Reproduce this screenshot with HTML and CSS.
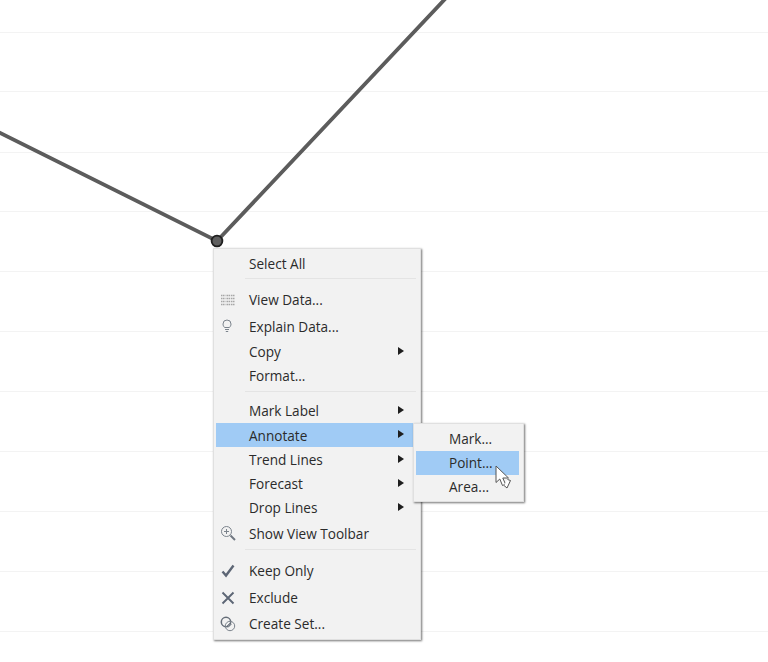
FILE: index.html
```html
<!DOCTYPE html>
<html lang="en">
<head>
<meta charset="utf-8">
<title>Annotate menu</title>
<link rel="stylesheet" href="styles.css">
</head>
<body>
<main class="stage">
  <svg class="chart" width="768" height="662" viewBox="0 0 768 662">
    <g class="grid">
      <path d="M0 32.5H768M0 91.5H768M0 152.5H768M0 211.5H768M0 271.5H768M0 331.5H768M0 391.5H768M0 451.5H768M0 511.5H768M0 571.5H768M0 631.5H768"/>
    </g>
    <polyline class="trend" points="-4,131 217,241 446,-2"/>
    <circle class="mark" cx="217" cy="241" r="5.4"/>
  </svg>

  <div class="menu main-menu">
    <div class="row">Select All</div>
    <div class="sep sep-a"></div>
    <div class="row tall"><svg class="icon" viewBox="0 0 16 12"><path class="tbl" d="M1 1.500H15M1 4.500H15M1 7.500H15M1 10.500H15"/><path class="tbl-cut" d="M5.500 0V12M10.500 0V12"/></svg>View Data...</div>
    <div class="row tall"><svg class="icon bulb" viewBox="0 0 16 16"><path class="thin" d="M5.600 10.500C4.600 9.500 4 8.400 4 7a4 4 0 0 1 8 0c0 1.400-.6 2.500-1.600 3.500zM6 12.500H10M6.800 14.500H9.200"/></svg>Explain Data...</div>
    <div class="row">Copy<span class="arrow"></span></div>
    <div class="row">Format...</div>
    <div class="sep sep-b"></div>
    <div class="row">Mark Label<span class="arrow"></span></div>
    <div class="row active annotate">Annotate<span class="arrow"></span></div>
    <div class="row">Trend Lines<span class="arrow"></span></div>
    <div class="row">Forecast<span class="arrow"></span></div>
    <div class="row">Drop Lines<span class="arrow"></span></div>
    <div class="row tall toolbar"><svg class="icon" viewBox="0 0 16 16"><circle class="thin" cx="6.500" cy="6.500" r="5"/><path class="thin" d="M4 6.500H9M6.500 4V9"/><path class="thick" d="M10.500 10.500L15 15"/></svg>Show View Toolbar</div>
    <div class="sep sep-c"></div>
    <div class="row tall keep"><svg class="icon" viewBox="0 0 16 16"><path class="check" d="M2.500 8.500L6 12.500L13.500 2.500"/></svg>Keep Only</div>
    <div class="row tall exclude"><svg class="icon" viewBox="0 0 16 16"><path class="cross" d="M2.500 2.500L13.500 13.500M13.500 2.500L2.500 13.500"/></svg>Exclude</div>
    <div class="row tall"><svg class="icon" viewBox="0 0 16 16"><circle class="thick-ring" cx="6" cy="6" r="4.700"/><circle class="thin" cx="10" cy="10" r="4.700"/><path class="thin" d="M6.500 10.500L10.500 6.500M8 11.500L11.500 8"/></svg>Create Set...</div>
  </div>

  <div class="menu sub-menu">
    <div class="row sub-row">Mark...</div>
    <div class="row sub-row active">Point...</div>
    <div class="row sub-row">Area...</div>
  </div>

  <svg class="cursor" width="18" height="25" viewBox="0 0 18 25"><path d="M1 1V17.500L4.800 14L7.500 20.500L10.500 19.200L7.800 13H13.500L1 1Z"/><path d="M9 20.500L12 23L15.500 15.500L12.500 14.500"/></svg>
</main>
</body>
</html>
```
FILE: styles.css
```css
* { box-sizing: border-box; }
html, body { margin: 0; padding: 0; background: #fff; }
.stage {
  position: relative;
  width: 768px;
  height: 662px;
  overflow: hidden;
  font-family: "Open Sans", "Noto Sans", sans-serif;
  font-size: 13.6px;
  color: #2b2b2b;
}
.chart { display: block; }
.grid path { fill: none; stroke: #f3f3f3; stroke-width: 1; }
.trend { fill: none; stroke: #5c5c5c; stroke-width: 3.8; }
.mark { fill: #5f5f5f; stroke: #1f1f1f; stroke-width: 1.8; }

.menu {
  position: absolute;
  background: #f2f2f2;
  border: 1px solid #e0e0e0;
  box-shadow: 1px 1px 2px rgba(0, 0, 0, .55);
}
.main-menu { left: 213px; top: 248px; width: 208px; height: 392px; padding: 3px 7px 3px 2px; }
.sub-menu { left: 413px; top: 423px; width: 111px; height: 79px; padding: 3px 4px 0 2px; }

.row {
  position: relative;
  height: 24px;
  line-height: 24px;
  padding-left: 33px;
  white-space: nowrap;
}
.row.tall { height: 26.500px; line-height: 26.500px; }
.row.active { background: #a0cbf5; }
.row.annotate { height: 24px; line-height: 26px; margin-bottom: 1px; }
.row.toolbar { height: 27.500px; line-height: 27.500px; }
.row.keep { height: 27px; line-height: 25.500px; }
.row.exclude { height: 26px; line-height: 26px; }
.sub-row { padding-left: 33px; }

.sep { margin-left: 29px; margin-right: -3px; border-top: 1px solid #e4e4e4; }
.sep-a { height: 9px; margin-top: 2px; }
.sep-b { height: 8px; margin-top: 3px; }
.sep-c { height: 9px; margin-top: 1px; }

.arrow {
  position: absolute;
  right: 9px;
  top: 7px;
  border-left: 6px solid #1e1e1e;
  border-top: 4.500px solid transparent;
  border-bottom: 4.500px solid transparent;
}
.icon {
  position: absolute;
  left: 4px;
  top: 5px;
  width: 16px;
  height: 16px;
  fill: none;
}
.bulb { left: 3px; top: 3px; }
.tbl { stroke: #a6a6a6; stroke-width: 1.400; stroke-dasharray: 1.500 .500; }
.tbl-cut { stroke: #f2f2f2; stroke-width: .6; }
.thin { fill: none; stroke: #7b838c; stroke-width: 1; }
.thick { stroke: #6f7680; stroke-width: 2; }
.thick-ring { fill: none; stroke: #656d78; stroke-width: 1.500; }
.check { stroke: #5d6675; stroke-width: 2.400; }
.cross { stroke: #5d6675; stroke-width: 1.900; }

.cursor { position: absolute; left: 495px; top: 465px; }
.cursor path { fill: #fff; stroke: #555; stroke-width: 1; }
```
